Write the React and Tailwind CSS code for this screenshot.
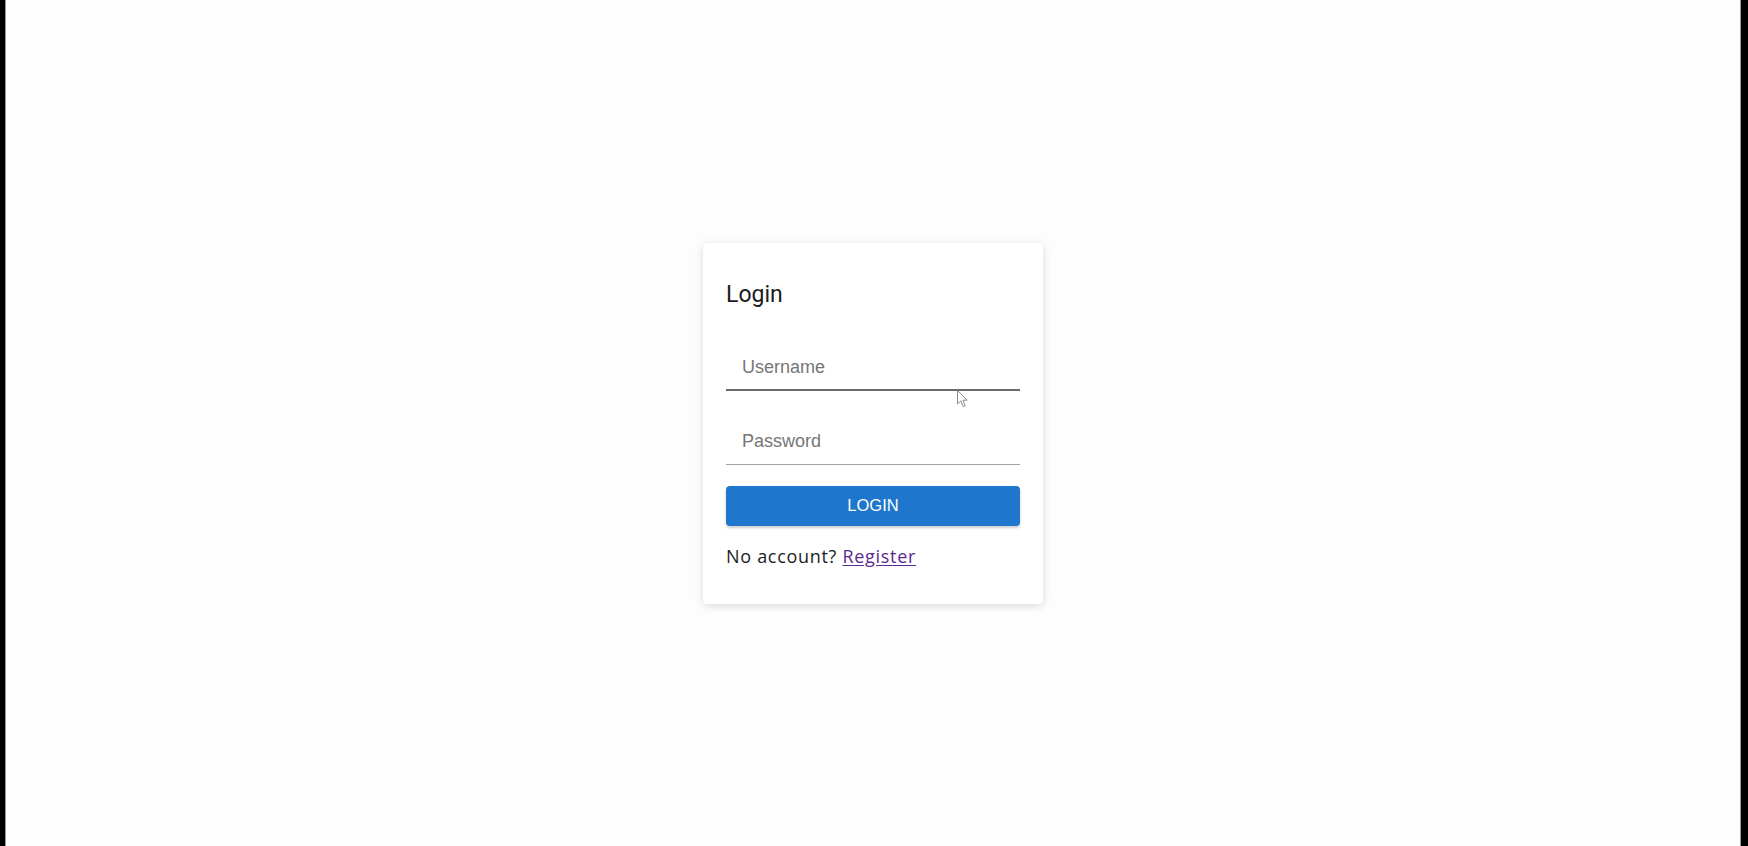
import React from "react";

function Cursor() {
  return (
    <svg
      className="absolute left-[254px] top-[147px] pointer-events-none"
      width="11"
      height="18"
      viewBox="0 0 11 18"
    >
      <path
        d="M0.5 0.5 L0.5 14 L3.8 10.9 L6.2 16.6 L8.2 15.7 L5.9 10.2 L10.2 10.2 Z"
        fill="#ffffff"
        stroke="#8a8a8a"
        strokeWidth="1"
        strokeLinejoin="round"
      />
    </svg>
  );
}

export default function App() {
  return (
    <div className="flex h-[846px] w-full bg-black">
      {/* Left frame edge */}
      <div className="w-[5px] bg-black" />
      <div className="w-px bg-[#9a9a9a]" />

      <main className="flex-1 flex items-center justify-center bg-[#fdfdfd]">
        <div className="relative w-[340px] bg-white rounded-[4px] shadow-[0_2px_8px_rgba(0,0,0,0.14)] px-[23px] pt-[36px] pb-[34px]">
          <h1 className="text-[23px] leading-8 text-[#1c1c1c] font-['Roboto',sans-serif]">
            Login
          </h1>

          <form className="mt-[34px] font-['Liberation_Sans',Arial,sans-serif]" onSubmit={(e) => e.preventDefault()}>
            <input
              type="text"
              placeholder="Username"
              className="block w-full h-[46px] pt-[11px] pb-[9px] px-4 text-[18px] leading-6 bg-transparent border-b-2 border-[#6b6b6b] outline-none placeholder:text-[#767676]"
            />
            <input
              type="password"
              placeholder="Password"
              className="block w-full mt-[28px] h-[46px] pt-[11px] pb-[10px] px-4 text-[18px] leading-6 bg-transparent border-b border-[#a3a3a3] outline-none placeholder:text-[#767676]"
            />
            <button
              type="submit"
              className="block w-full mt-[21px] h-10 rounded-[4px] bg-[#1e77cd] text-white text-[16.5px] uppercase shadow-[0_2px_3px_rgba(0,0,0,0.2)]"
            >
              Login
            </button>
          </form>

          <p className="mt-[17px] text-[18px] leading-[27px] tracking-[0.7px] text-[#1c1c1c] font-['Open_Sans',sans-serif]">
            No account?{" "}
            <a href="#" className="text-[#5b2a8e] underline underline-offset-2">
              Register
            </a>
          </p>

          <Cursor />
        </div>
      </main>

      {/* Right frame edge */}
      <div className="w-px bg-[#9a9a9a]" />
      <div className="w-[7px] bg-black" />
    </div>
  );
}
